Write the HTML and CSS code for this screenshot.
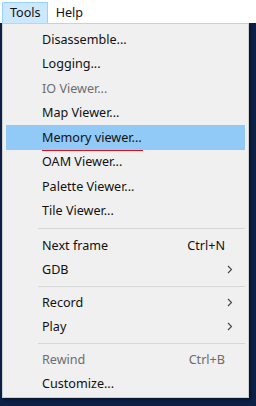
FILE: index.html
```html
<!DOCTYPE html>
<html lang="en">
<head>
  <meta charset="UTF-8">
  <title>Tools menu</title>
  <link rel="stylesheet" href="styles.css">
</head>
<body>
  <div class="menubar">
    <span class="top-item active">Tools</span>
    <span class="top-item">Help</span>
  </div>

  <div class="desk">
    <div class="menu">
      <div class="item">Disassemble...</div>
      <div class="item">Logging...</div>
      <div class="item disabled">IO Viewer...</div>
      <div class="item">Map Viewer...</div>
      <div class="item hover"><span class="marked">Memory viewer...</span></div>
      <div class="item">OAM Viewer...</div>
      <div class="item">Palette Viewer...</div>
      <div class="item">Tile Viewer...</div>
      <div class="sep first"></div>
      <div class="item">Next frame<span class="key">Ctrl+N</span></div>
      <div class="item">GDB<svg class="arrow" width="6" height="9" viewBox="0 0 6 9"><polyline points="1,1 4.5,4.5 1,8" fill="none" stroke="#444" stroke-width="1.1"/></svg></div>
      <div class="sep"></div>
      <div class="item">Record<svg class="arrow" width="6" height="9" viewBox="0 0 6 9"><polyline points="1,1 4.5,4.5 1,8" fill="none" stroke="#444" stroke-width="1.1"/></svg></div>
      <div class="item">Play<svg class="arrow" width="6" height="9" viewBox="0 0 6 9"><polyline points="1,1 4.5,4.5 1,8" fill="none" stroke="#444" stroke-width="1.1"/></svg></div>
      <div class="sep"></div>
      <div class="item disabled">Rewind<span class="key">Ctrl+B</span></div>
      <div class="item">Customize...</div>
    </div>
  </div>
</body>
</html>
```

FILE: styles.css
```css
* {
  box-sizing: border-box;
}

body {
  margin: 0;
  width: 256px;
  height: 406px;
  overflow: hidden;
  background: #0c2046;
  font-family: 'Noto Sans', 'Noto Sans CJK KR', sans-serif;
  font-size: 12.6px;
  color: #111;
}

.menubar {
  height: 23px;
  background: #ffffff;
  display: flex;
  padding: 2px 0 0 2px;
}

.top-item {
  padding: 0 6px 0 7px;
  line-height: 19px;
  border: 1px solid transparent;
}

.top-item.active {
  background: #cce8ff;
  border-color: #99d1ff;
  border-bottom: none;
}

.desk {
  padding: 0 7px 8px 2px;
}

.menu {
  width: 247px;
  height: 375px;
  background: #f0f0f0;
  border: 1px solid #cfcfcf;
  padding: 3px 3px 0 3px;
  box-shadow: 2px 2px 2px rgba(0, 0, 0, 0.35);
}

.item {
  height: 24.5px;
  display: flex;
  align-items: center;
  padding: 0 20px 0 36px;
}

.item.hover {
  background: #91c9f7;
}

.item.disabled {
  color: #6d6d6d;
}

.marked {
  position: relative;
}

.marked::after {
  content: "";
  position: absolute;
  left: 0;
  right: -1px;
  bottom: -5px;
  height: 1px;
  background: #e0101c;
}

.key {
  margin-left: auto;
}

.arrow {
  margin-left: auto;
  margin-right: -8px;
}

.sep {
  height: 8px;
  margin-left: 32px;
  display: flex;
  align-items: center;
}

.sep::before {
  content: "";
  flex: 1;
  height: 1px;
  background: #d7d7d7;
}

.sep.first {
  height: 10px;
}
```
